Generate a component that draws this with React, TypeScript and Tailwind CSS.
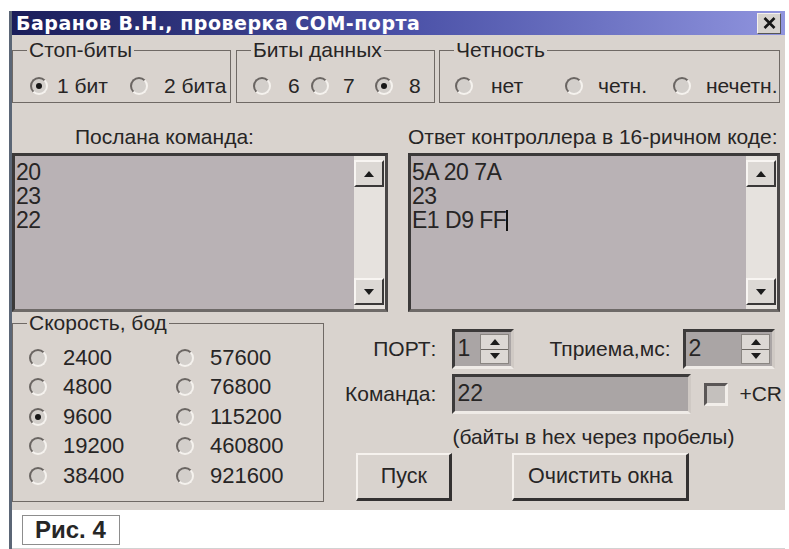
import React from "react";

type OptionProps = {
  label: string;
  checked?: boolean;
  className?: string;
  gap?: string;
};

// Classic sunken radio button
function Radio({ checked }: { checked?: boolean }) {
  return (
    <span className="flex items-center justify-center w-[18px] h-[18px] shrink-0 rounded-full border-2 border-t-[#6a6562] border-l-[#6a6562] border-r-[#f5f2ee] border-b-[#f5f2ee] bg-[#d3cfcb]">
      {checked && <span className="w-[6px] h-[6px] rounded-full bg-[#161616]" />}
    </span>
  );
}

function Option({ label, checked, className = "", gap = "gap-[16px]" }: OptionProps) {
  return (
    <label className={`flex items-center ${gap} ${className}`}>
      <Radio checked={checked} />
      <span className="leading-[22px]">{label}</span>
    </label>
  );
}

function GroupBox({
  title,
  className = "",
  children,
}: {
  title: string;
  className?: string;
  children: React.ReactNode;
}) {
  return (
    <fieldset className={`border border-[#6f6965] ${className}`}>
      <legend className="ml-[14px] px-[2px] text-[21px] leading-[20px]">{title}</legend>
      {children}
    </fieldset>
  );
}

function Arrow({ up }: { up?: boolean }) {
  return (
    <svg width="10" height="6" viewBox="0 0 10 6">
      <path d={up ? "M0 6 L5 0 L10 6 Z" : "M0 0 L5 6 L10 0 Z"} fill="#1c1c1c" />
    </svg>
  );
}

function ScrollButton({ up }: { up?: boolean }) {
  return (
    <div className="h-[27px] flex items-center justify-center bg-[#dcd8d4] border-2 border-t-[#f8f5f2] border-l-[#f8f5f2] border-r-[#3a3838] border-b-[#3a3838]">
      <Arrow up={up} />
    </div>
  );
}

function Memo({ lines, caret, className = "" }: { lines: string[]; caret?: boolean; className?: string }) {
  return (
    <div
      className={`flex h-[159px] bg-[#b9b2b5] border-[3px] border-t-[#3b3939] border-l-[#3b3939] border-r-[#4a4747] border-b-[#6e6a68] ${className}`}
    >
      <div className="flex-1 pl-[1px] pt-[4px] text-[23px] leading-[24px] tracking-[-0.5px]">
        {lines.map((line, i) => (
          <div key={i}>
            {line}
            {caret && i === lines.length - 1 && (
              <span className="inline-block w-[2px] h-[21px] bg-[#111] align-[-3px]" />
            )}
          </div>
        ))}
      </div>
      <div className="w-[31px] flex flex-col justify-between py-[4px] pr-[1px] bg-[#e6e2de]">
        <ScrollButton up />
        <ScrollButton />
      </div>
    </div>
  );
}

function Spinner({ value, className = "" }: { value: string; className?: string }) {
  return (
    <div
      className={`flex h-[40px] bg-[#aaa5a5] border-[3px] border-t-[#3c3a3a] border-l-[#3c3a3a] border-r-[#cfc9c4] border-b-[#efebe7] ${className}`}
    >
      <span className="flex-1 pl-[2px] text-[23px] leading-[32px]">{value}</span>
      <div className="w-[29px] my-[2px] mr-[2px] flex flex-col bg-[#dcd8d4] border border-[#8a8682]">
        <div className="flex-1 flex items-center justify-center border-b border-[#6a6662]">
          <Arrow up />
        </div>
        <div className="flex-1 flex items-center justify-center">
          <Arrow />
        </div>
      </div>
    </div>
  );
}

function Button({ label, className = "" }: { label: string; className?: string }) {
  return (
    <button
      className={`h-[48px] text-[21.5px] bg-[#d9d3ce] border-2 border-r-[3px] border-b-[3px] border-t-[#f6f2ee] border-l-[#f6f2ee] border-r-[#333131] border-b-[#333131] ${className}`}
    >
      {label}
    </button>
  );
}

const speeds: [string, boolean][] = [
  ["2400", false],
  ["57600", false],
  ["4800", false],
  ["76800", false],
  ["9600", true],
  ["115200", false],
  ["19200", false],
  ["460800", false],
  ["38400", false],
  ["921600", false],
];

export default function App() {
  return (
    <div className="w-[789px] h-[549px] bg-white overflow-hidden font-['Liberation_Sans',Arial,sans-serif] text-[#272525]">
      <div className="h-[11px]" />
      <div className="ml-[9px] w-[776px] h-[538px] border-l-[3px] border-[#5b6676] flex flex-col">
        {/* window */}
        <div className="w-[773px] flex flex-col">
          <div className="h-[24px] flex items-center pl-[4px] pr-[4px] bg-linear-to-r from-[#1a1d5a] via-[#4a50a6] to-[#9094de]">
            <span className="flex-1 font-['DejaVu_Sans',sans-serif] font-bold text-[19px] leading-[24px] tracking-[0.5px] text-white">
              Баранов В.Н., проверка COM-порта
            </span>
            <div className="w-[24px] h-[21px] flex items-center justify-center bg-[#d6d2ce] border border-t-[#f4f0ec] border-l-[#f4f0ec] border-r-[#555] border-b-[#555]">
              <svg width="13" height="12" viewBox="0 0 13 12">
                <path d="M1.5 1 L11.5 11 M11.5 1 L1.5 11" stroke="#161616" strokeWidth="2.6" />
              </svg>
            </div>
          </div>

          <div className="h-[475px] bg-[#d9d3ce] flex flex-col pr-[3px]">
            {/* stop bits / data bits / parity */}
            <div className="flex mt-[5px] h-[63px] text-[21px]">
              <GroupBox title="Стоп-биты" className="w-[219px]">
                <div className="flex items-center h-[32px] mt-[10px] pl-[17px]">
                  <Option label="1 бит" checked gap="gap-[9px]" className="w-[100px]" />
                  <Option label="2 бита" />
                </div>
              </GroupBox>
              <GroupBox title="Биты данных" className="w-[199px] ml-[5px]">
                <div className="flex items-center h-[32px] mt-[10px] pl-[16px]">
                  <Option label="6" gap="gap-[17px]" className="w-[58px]" />
                  <Option label="7" gap="gap-[14px]" className="w-[64px]" />
                  <Option label="8" gap="gap-[16px]" checked />
                </div>
              </GroupBox>
              <GroupBox title="Четность" className="w-[341px] ml-[4px]">
                <div className="flex items-center h-[32px] mt-[10px] pl-[15px]">
                  <Option label="нет" gap="gap-[18px]" className="w-[110px]" />
                  <Option label="четн." gap="gap-[15px]" className="w-[108px]" />
                  <Option label="нечетн." gap="gap-[15px]" />
                </div>
              </GroupBox>
            </div>

            {/* memo captions */}
            <div className="flex mt-[23px] h-[22px] text-[21px] leading-[22px]">
              <span className="w-[376px] pl-[63px]">Послана команда:</span>
              <span className="ml-[20px]">Ответ контроллера в 16-ричном коде:</span>
            </div>

            <div className="flex mt-[5px]">
              <Memo lines={["20", "23", "22"]} className="w-[376px]" />
              <Memo lines={["5A 20 7A", "23", "E1 D9 FF"]} caret className="w-[372px] ml-[20px]" />
            </div>

            <div className="flex mt-[1px]">
              <GroupBox title="Скорость, бод" className="w-[313px] h-[189px]">
                <div className="grid grid-cols-[147px_1fr] auto-rows-[29.5px] items-center pt-[10px] pl-[16px] text-[22px]">
                  {speeds.map(([label, checked]) => (
                    <Option key={label} label={label} checked={checked} />
                  ))}
                </div>
              </GroupBox>

              <div className="flex-1 flex flex-col text-[21px]">
                <div className="flex items-center mt-[16px] h-[40px]">
                  <span className="w-[112px] text-right">ПОРТ:</span>
                  <Spinner value="1" className="w-[62px] ml-[16px]" />
                  <span className="ml-[35px]">Тприема,мс:</span>
                  <Spinner value="2" className="w-[92px] ml-[13px]" />
                </div>
                <div className="flex items-center mt-[5px] h-[40px]">
                  <span className="w-[112px] text-right">Команда:</span>
                  <div className="w-[239px] h-[40px] ml-[16px] pl-[2px] bg-[#aaa5a5] border-[3px] border-t-[#3c3a3a] border-l-[#3c3a3a] border-r-[#cfc9c4] border-b-[#efebe7] text-[23px] leading-[32px]">
                    22
                  </div>
                  <span className="ml-[13px] w-[24px] h-[23px] border-[3px] border-t-[#5a5656] border-l-[#5a5656] border-r-[#f2eeea] border-b-[#f2eeea] bg-[#c4c0bd]" />
                  <span className="ml-[11px]">+CR</span>
                </div>
                <div className="mt-[12px] h-[22px] leading-[22px] pl-[128px]">(байты в hex через пробелы)</div>
                <div className="flex mt-[5px] pl-[32px]">
                  <Button label="Пуск" className="w-[96px]" />
                  <Button label="Очистить окна" className="w-[177px] ml-[60px]" />
                </div>
              </div>
            </div>
          </div>
        </div>

        {/* figure caption */}
        <div className="flex-1 border-b border-[#d2d2d2] pl-[10px] pt-[5px]">
          <div className="w-[98px] h-[30px] flex items-center pl-[12px] border border-[#8d8d8d] font-bold text-[24px] text-[#262626]">
            Рис. 4
          </div>
        </div>
      </div>
    </div>
  );
}
